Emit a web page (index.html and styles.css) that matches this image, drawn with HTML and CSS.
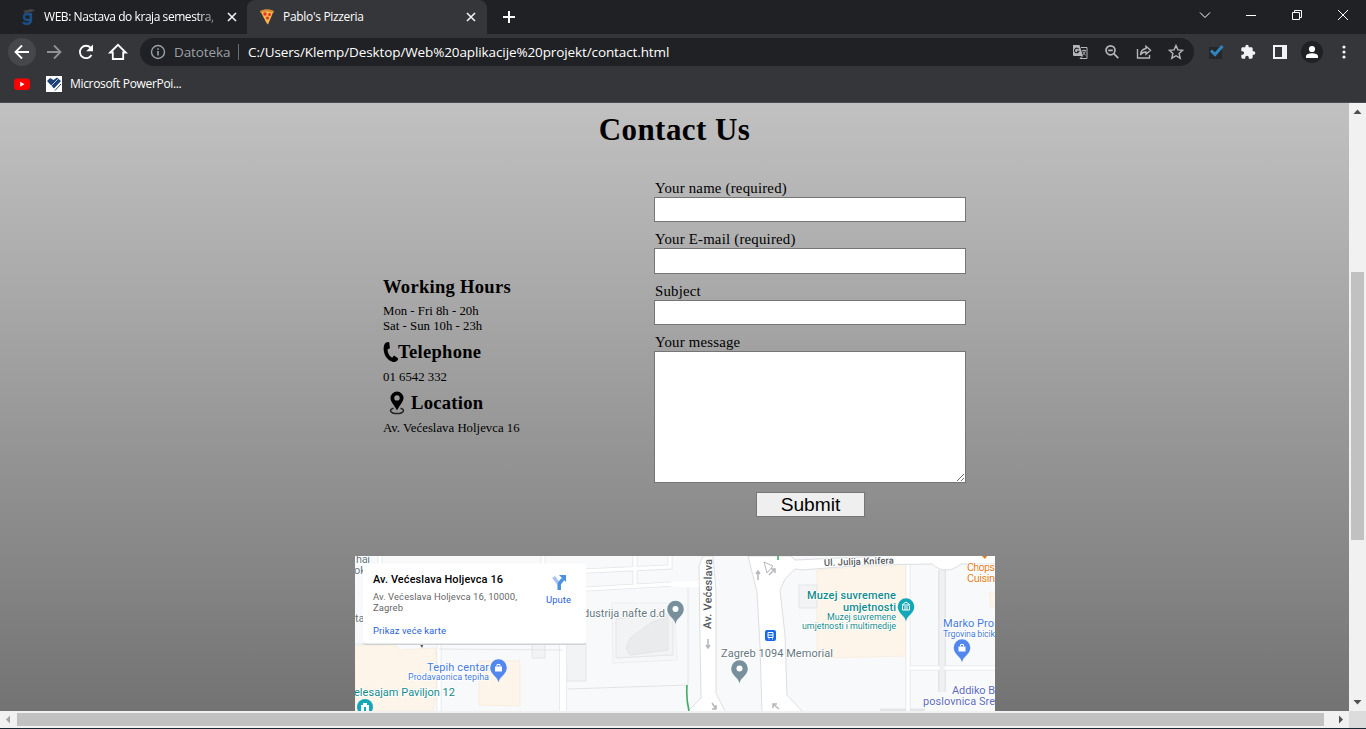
FILE: index.html
```html
<!DOCTYPE html>
<html lang="hr">
<head>
<meta charset="utf-8">
<title>Pablo's Pizzeria</title>
<link rel="stylesheet" href="styles.css">
</head>
<body>
<div class="browser">
  <header class="tabstrip">
    <div class="tab tab-idle">
      <svg class="favicon" viewBox="0 0 16 16"><path d="M3 2l8-2 4 1-3 2-7 1z" fill="#42454b"/><path d="M11 4v7c0 5-7 4.500-8 2M11 8c0-4-7-4-7 0s7 4 7 0z" fill="none" stroke="#1b4f86" stroke-width="2.300"/></svg>
      <span class="tab-title fade">WEB: Nastava do kraja semestra,</span>
      <svg class="close" viewBox="0 0 10 10"><path d="M1 1l8 8M9 1L1 9"/></svg>
    </div>
    <div class="tab tab-active">
      <svg class="favicon" viewBox="0 0 16 16"><path d="M1.500 2.500C5 .5 11 .5 14.500 2.500L9 15.500 7.500 14z" fill="#f6b64b"/><path d="M1 2C5-.5 11-.5 15 2l-.6 2C11 2 5 2 1.800 4z" fill="#d58a35"/><circle cx="6" cy="5" r="1.700" fill="#e5342b"/><circle cx="10.500" cy="5.500" r="1.500" fill="#e5342b"/><circle cx="8.500" cy="9" r="1.600" fill="#e5342b"/></svg>
      <span class="tab-title">Pablo's Pizzeria</span>
      <svg class="close" viewBox="0 0 10 10"><path d="M1 1l8 8M9 1L1 9"/></svg>
    </div>
    <svg class="newtab" viewBox="0 0 12 12"><path d="M6 0v12M0 6h12"/></svg>
    <div class="winctl">
      <svg viewBox="0 0 12 12"><path d="M1 3.500l5 5 5-5"/></svg>
      <svg viewBox="0 0 12 12"><path d="M1 6.500h10"/></svg>
      <svg viewBox="0 0 12 12"><path d="M1.500 3.500h7v7h-7zM3.500 3.500v-2h7v7h-2"/></svg>
      <svg viewBox="0 0 12 12"><path d="M1 1l10 10M11 1L1 11"/></svg>
    </div>
  </header>

  <div class="toolbar">
    <span class="round"><svg class="ic" viewBox="0 0 20 20"><path d="M17 10H4M10 3.500L3.500 10l6.500 6.500" class="nav"/></svg></span>
    <svg class="ic dim" viewBox="0 0 20 20"><path d="M3 10h13M10 3.500l6.500 6.500-6.500 6.500" class="nav"/></svg>
    <svg class="ic" viewBox="0 0 20 20"><path d="M15.500 13a6.200 6.200 0 1 1-.8-7.200" class="nav"/><path d="M17 2.500v6.800h-6.800z" fill="#fff"/></svg>
    <svg class="ic" viewBox="0 0 20 20"><path d="M2.200 10.500L10 2.800l7.800 7.700h-2.600V17H4.800v-6.500z" class="nav"/></svg>
    <div class="omnibox">
      <svg class="info" viewBox="0 0 16 16"><circle cx="8" cy="8" r="6.500" fill="none" stroke="#9aa0a6" stroke-width="1.400"/><path d="M8 7v4.500M8 4.200v1.600" stroke="#9aa0a6" stroke-width="1.600"/></svg>
      <span class="scheme">Datoteka</span><span class="divider"></span><span class="url">C:/Users/Klemp/Desktop/Web%20aplikacije%20projekt/contact.html</span>
      <div class="omni-icons">
        <svg viewBox="0 0 16 16"><path d="M1 1h6.500l3.500 11H2a1 1 0 0 1-1-1z" fill="#b5b7ba"/><path d="M9 3.500h6v11H8l2.500-2.500" fill="none" stroke="#b5b7ba"/><path d="M6.800 5.300a2.300 2.300 0 1 0 .2 1.900H5" fill="none" stroke="#202124" stroke-width="1.100"/><path d="M10 6.500h4M12 5.500v1M13.300 6.500c-.3 2-1.300 3.500-2.500 4.500M10.800 7.500c.5 1.500 1.500 2.700 2.900 3.700" fill="none" stroke="#b5b7ba" stroke-width=".9"/></svg>
        <svg viewBox="0 0 16 16" class="line"><circle cx="6.500" cy="6.300" r="4.500"/><path d="M9.800 9.600l4.500 4.500M4.200 6.300h4.600"/></svg>
        <svg viewBox="0 0 16 16" class="line thin"><path d="M1.500 5v9h12v-3M10 2.200l4.500 4-4.500 4V8C7.500 8 5.500 9 4.500 11c.2-4 2.500-6 5.500-6.500z"/></svg>
        <svg viewBox="0 0 16 16" class="line thin"><path d="M8 1.500l1.900 4.400 4.800.4-3.600 3.200 1.100 4.700L8 11.700l-4.200 2.500 1.100-4.700-3.600-3.200 4.800-.4z"/></svg>
      </div>
    </div>
    <div class="extensions">
      <svg viewBox="0 0 16 16"><path d="M1 3h13v12H1z" fill="#26272b"/><path d="M3 6.500l4 4L14.500 2" fill="none" stroke="#2e86bd" stroke-width="3"/></svg>
      <svg viewBox="0 0 24 24"><path fill="#f1f3f4" d="M20.500 11H19V7c0-1.100-.9-2-2-2h-4V3.500a2.500 2.500 0 0 0-5 0V5H4c-1.100 0-2 .9-2 2v3.800h1.500a2.700 2.700 0 0 1 0 5.400H2V20c0 1.100.9 2 2 2h3.800v-1.500a2.700 2.700 0 0 1 5.400 0V22H17c1.100 0 2-.9 2-2v-4h1.500a2.500 2.500 0 0 0 0-5z"/></svg>
      <svg viewBox="0 0 16 16"><path fill="#f1f3f4" fill-rule="evenodd" d="M1 1h14v14H1zM3 3v10h7V3z"/></svg>
      <span class="avatar"><svg viewBox="0 0 16 16"><circle cx="8" cy="5" r="3.100" fill="#fff"/><path d="M2 14v-1.700C2 10 6 9.300 8 9.300s6 .7 6 3V14z" fill="#fff"/></svg></span>
      <svg viewBox="0 0 16 16" fill="#f1f3f4"><circle cx="8" cy="3" r="1.600"/><circle cx="8" cy="8" r="1.600"/><circle cx="8" cy="13" r="1.600"/></svg>
    </div>
  </div>

  <nav class="bookmarks">
    <svg class="bm" viewBox="0 0 16 16"><rect y="2.500" width="16" height="11.500" rx="3" fill="#f00"/><path d="M6.200 5.700v5l4.300-2.500z" fill="#fff"/></svg>
    <svg class="bm bm-two" viewBox="0 0 16 16"><path d="M0 0h16v16H0z" fill="#fff"/><path d="M1 5l3-3 3.500 2L11 1.500 15 5l-7 7.500z" fill="#1d4079"/><path d="M8 14l7-8M5 10l7-7M10 14l5-5.500" stroke="#fff" stroke-width=".7"/><path d="M9 14.500l6-6.500" stroke="#1d4079" stroke-width="1"/></svg>
    <span class="bm-label">Microsoft PowerPoi...</span>
  </nav>

  <div class="viewport">
    <main class="page">
      <h1 class="heading">Contact Us</h1>
      <div class="contact">
        <section class="details">
          <h2 class="sub">Working Hours</h2>
          <p class="text">Mon - Fri 8h - 20h<br>Sat - Sun 10h - 23h</p>
          <h2 class="sub"><svg class="phone" viewBox="0 0 15 20"><path d="M5.500 0L3 .6C-1.500 4 .2 17.500 10 20c2 .3 4-.7 5-2.600.2-.6 0-1-.4-1.400l-2.800-2c-.6-.3-1.100-.2-1.500.3l-1 1.400C6.500 14.500 4.500 11 4.600 7.300l1.500-.5c.6-.2.8-.6.7-1.200L6.300.8C6.200.2 6 0 5.500 0z"/></svg>Telephone</h2>
          <p class="text">01 6542 332</p>
          <h2 class="sub"><svg class="place" viewBox="0 0 16 24"><path fill-rule="evenodd" d="M8 .5a6.500 6.500 0 0 0-6.500 6.500c0 4 4.500 8 6.500 12.500 2-4.500 6.500-8.500 6.500-12.500A6.500 6.500 0 0 0 8 .5zm0 3.700a2.700 2.700 0 1 1 0 5.400 2.700 2.700 0 0 1 0-5.400z"/><path d="M4.500 17.200C-.5 18.500 1 22.500 8 22.500s8.500-4 3.500-5.300" fill="none" stroke="#222" stroke-width="1.500"/></svg>Location</h2>
          <p class="text">Av. Većeslava Holjevca 16</p>
        </section>
        <form class="form">
          <label class="field">Your name (required)<input class="input" type="text"></label>
          <label class="field">Your E-mail (required)<input class="input tall" type="text"></label>
          <label class="field">Subject<input class="input" type="text"></label>
          <label class="field">Your message<textarea class="input area"></textarea></label>
          <button class="submit" type="button">Submit</button>
        </form>
      </div>

      <svg class="map" viewBox="355 556 640 155">
        <defs>
          <path id="pin" d="M0 15C-.8 9-8.300 7-8.300 0a8.300 8.300 0 0 1 16.600 0C8.300 7 .8 9 0 15z"/>
        </defs>
        <rect x="355" y="556" width="640" height="155" fill="#f8f9fa"/>
        <g fill="#fef5ea" stroke="#f8e8d6" stroke-width=".7">
          <path d="M355 646l40-1 5 5 35-2 3 32-5 31h-78z"/>
          <path d="M479 661h41v45l-41-1z"/>
          <path d="M817 570l91-6v92l-91 2z"/>
          <path d="M990 592h8v16l-8-2z"/>
        </g>
        <g fill="#f2f3f5" stroke="#e3e5e8">
          <path d="M532 641h13v17h-13zM566 643h20v38h-19zM799 585h18v23h-18z"/>
          <path d="M612 603h62l3 57-64 3z" fill="#f6f7f8" stroke="#eceef0"/>
          <path d="M616 619l8-1 41-4 8 3v38l-57 3z"/>
          <path d="M629 653l-3-5 4-10 22-16 16-5v33l-38 5z" fill="#eaebed"/>
        </g>
        <g fill="none" stroke="#e3e5e8" stroke-width="5">
          <path d="M586 571l84-4v-11M586 589l87-5M635 556v30M439 645v66M380 556v10M543 556v9M908 556v155M910 668h85M880 711h45"/>
          <path d="M563 644v67M942 570v122" stroke-width="8"/>
        </g>
        <g fill="none" stroke="#fff" stroke-width="3.400">
          <path d="M586 571l84-4v-11M586 589l87-5M635 556v30M439 645v66M380 556v10M543 556v9M908 556v155M910 668h85"/>
          <path d="M563 644v67" stroke-width="6.500"/>
        </g>
        <path d="M942 570v122" fill="none" stroke="#eff0f2" stroke-width="5"/>
        <path d="M355 644h84M439 649l124 1M568 689l120-4M688 588v97" fill="none" stroke="#e2e4e7"/>
        <path d="M671 581h29v6h-29z" fill="#fff"/>
        <g fill="#fff" stroke="#dcdee1">
          <path d="M703 556h10l3 35 0 80 0 22 10 20h-40l15-15-1-60-1-72z"/>
          <path d="M748 556h43l4 4 67-3 66-5h70v12h-37c-10 8-20 8-29 0l-68 1-62 5-7-1-10 10-5 11 5 45 2 60 17 18h-42l-2-67-3-54z"/>
        </g>
        <path d="M687 685q-1 14 2 26M778 556v4" fill="none" stroke="#46aa69" stroke-width="1.600"/>
        <g fill="none" stroke="#b4b7bb" stroke-width="1.500">
          <path d="M708 639v9m-2-3l2 3 2-3M758 580v-9m-2 3l2-3 2 3M769 575l6-6m-4 0h4v4M712 703l4 6m0-4v4h-4M779 709l-6-5m0 4v-4h4"/>
          <path d="M764 562l9 4-6 7z" stroke-width="1"/>
        </g>
        <g class="m-road">
          <text x="711" y="629" transform="rotate(-89 711 629)" textLength="70">Av. Većeslava</text>
          <text x="824" y="566" transform="rotate(-2 824 566)" class="m-street" textLength="70">Ul. Julija Knifera</text>
        </g>
        <g class="m-grey">
          <text x="356" y="563" textLength="14">hai</text><text x="354" y="574">ok</text><text x="355" y="622">ta</text>
          <text x="583" y="617" textLength="82">dustrija nafte d.d</text>
          <text x="721" y="657" textLength="112">Zagreb 1094 Memorial</text>
        </g>
        <g class="m-teal">
          <text x="807" y="599" class="strong" textLength="89">Muzej suvremene</text>
          <text x="843" y="611" class="strong" textLength="53">umjetnosti</text>
          <text x="827" y="620" class="small" textLength="69">Muzej suvremene</text>
          <text x="802" y="629" class="small" textLength="94">umjetnosti i multimedije</text>
          <text x="354" y="696" textLength="101">elesajam Paviljon 12</text>
        </g>
        <g class="m-blue">
          <text x="427" y="671" textLength="62">Tepih centar</text>
          <text x="408" y="680" class="small" textLength="81">Prodavaonica tepiha</text>
          <text x="943" y="627" textLength="51">Marko Pro</text>
          <text x="943" y="637" class="small" textLength="52">Trgovina bicik</text>
        </g>
        <g class="m-orange"><text x="967" y="571" textLength="28">Chops</text><text x="967" y="582" textLength="28">Cuisin</text><path d="M982 556h5l-2 3z"/></g>
        <g class="m-purple"><text x="952" y="694" textLength="43">Addiko B</text><text x="923" y="705" textLength="72">poslovnica Sre</text></g>
        <use href="#pin" x="675.500" y="609" fill="#78909c"/><circle cx="675.500" cy="609" r="3" fill="#fff"/>
        <use href="#pin" x="739.500" y="668.500" fill="#78909c"/><circle cx="739.500" cy="668.500" r="3" fill="#fff"/>
        <use href="#pin" x="906" y="606.500" fill="#12a8b8"/>
        <path d="M902 605l4-3 4 3zM902.500 606v4h7v-4M905 606v4M907 606v4" stroke="#fff" fill="none"/>
        <use href="#pin" x="498.500" y="667.500" fill="#5187ee"/><path d="M495 666.500h7v5h-7z" fill="#fff"/><path d="M497 666.500v-2h3v2" fill="none" stroke="#fff"/>
        <use href="#pin" x="962" y="647.500" fill="#5187ee"/><path d="M958.500 646.500h7v5h-7z" fill="#fff"/><path d="M960.500 646.500v-2h3v2" fill="none" stroke="#fff"/>
        <circle cx="365" cy="707" r="8" fill="#12a8b8"/><path d="M361 705h8v6h-8zM363 705v-2h4v2" fill="#fff"/><path d="M364 707h2v4h-2z" fill="#12a8b8"/>
        <rect x="765" y="630" width="11" height="11" rx="2" fill="#1a68e8"/><path d="M768 632.500h5v5h-5zM768 635h5M768.500 639h1M772 639h1" fill="none" stroke="#fff"/>
        <path d="M419 643h5l-2 5z" fill="#555"/>
        <rect x="363" y="565" width="223" height="80" rx="2" fill="#cfd1d4"/>
        <rect x="363" y="563.500" width="223" height="80" rx="2" fill="#fff"/>
        <g class="card">
          <text x="373" y="583" class="card-title" textLength="130">Av. Većeslava Holjevca 16</text>
          <text x="373" y="600" textLength="144">Av. Većeslava Holjevca 16, 10000,</text>
          <text x="373" y="611" textLength="30">Zagreb</text>
          <text x="373" y="634" class="link" textLength="73">Prikaz veće karte</text>
          <text x="546" y="603" class="link" textLength="25">Upute</text>
        </g>
        <path d="M553.500 577l5.500 7" stroke="#a5c4f4" stroke-width="3.500" fill="none"/><path d="M559.200 590v-5c0-2 2-4 4-6" stroke="#4a90e2" stroke-width="3.500" fill="none"/><path d="M559 575h7v7z" fill="#4a90e2"/>
      </svg>
    </main>
    <div class="vscroll"><svg class="arrow" viewBox="0 0 17 17"><path d="M4.500 11l4-4.500 4 4.500z"/></svg><div class="vthumb"></div><svg class="arrow end" viewBox="0 0 17 17"><path d="M4.500 6l4 4.500 4-4.500z"/></svg></div>
    <div class="hscroll"><svg class="arrow pale" viewBox="0 0 17 17"><path d="M10 4.500L6 8.500l4 4z"/></svg><div class="hthumb"></div><svg class="arrow end" viewBox="0 0 17 17"><path d="M7 4.500l4 4-4 4z"/></svg></div>
    <div class="corner"></div>
  </div>
  <div class="edge"></div>
</div>
</body>
</html>
```
FILE: styles.css
```css
* { box-sizing: border-box; }
body { margin: 0; overflow: hidden; }
svg { display: block; flex: none; }
.browser { width: 1366px; height: 729px; display: flex; flex-direction: column; background: #35363a; font: 12px "Open Sans", sans-serif; color: #fff; overflow: hidden; }

.tabstrip { display: flex; height: 34px; background: #202124; align-items: center; }
.tab { display: flex; align-items: center; height: 34px; }
.tab-idle { width: 247px; padding-left: 20px; }
.tab-active { width: 240px; padding-left: 12px; background: #35363a; border-radius: 8px 8px 0 0; }
.favicon { width: 16px; height: 16px; margin-right: 8px; }
.tab-title { width: 173px; margin-right: -2px; white-space: nowrap; letter-spacing: -0.32px; line-height: 18px; }
.tab-active .tab-title { width: 185px; }
.fade { letter-spacing: -0.44px; -webkit-mask-image: linear-gradient(90deg, #000 88%, rgba(0,0,0,.3)); mask-image: linear-gradient(90deg, #000 88%, rgba(0,0,0,.3)); }
.close { width: 10px; height: 10px; margin-left: 12px; stroke: #f1f3f4; stroke-width: 1.6; }
.tab-active .close { margin-left: 0; }
.newtab { width: 12px; height: 12px; margin-left: 16px; stroke: #fff; stroke-width: 2; }
.winctl { display: flex; gap: 34px; margin: -5px 17px 0 auto; }
.winctl svg { width: 12px; height: 12px; fill: none; stroke: #fff; stroke-width: 1; }

.toolbar { display: flex; align-items: center; height: 36px; padding-left: 8px; }
.round { width: 28px; height: 28px; border-radius: 50%; background: #46474b; padding: 4px; margin-right: 8px; }
.ic { width: 20px; height: 20px; margin-right: 12px; }
.round .ic { margin: 0; }
.nav { fill: none; stroke: #fff; stroke-width: 1.8; }
.dim { opacity: .45; }
.omnibox { display: flex; align-items: center; width: 1054px; height: 28px; border-radius: 14px; background: #202124; padding: 0 10px; font-size: 13.5px; }
.info { width: 16px; height: 16px; margin-right: 8px; }
.scheme { width: 64px; color: #9aa0a6; white-space: nowrap; letter-spacing: -0.1px; }
.divider { width: 1px; height: 16px; background: #6a6d72; margin-right: 9px; }
.url { white-space: nowrap; letter-spacing: -0.11px; }
.omni-icons { display: flex; gap: 16px; margin-left: auto; }
.omni-icons svg { width: 16px; height: 16px; }
.line { fill: none; stroke: #b5b7ba; stroke-width: 1.7; }
.thin { stroke-width: 1.4; }
.extensions { display: flex; align-items: center; gap: 16px; margin-left: 14px; }
.extensions svg { width: 16px; height: 16px; }
.avatar { width: 22px; height: 22px; border-radius: 50%; background: #202124; padding: 3px; margin: 0 -3px; }

.bookmarks { display: flex; align-items: center; height: 33px; padding: 0 0 4px 14px; border-bottom: 1px solid #4c4d50; }
.bm { width: 16px; height: 16px; }
.bm-two { margin: 0 8px 0 16px; }
.bm-label { white-space: nowrap; letter-spacing: -0.33px; margin-top: -1px; }

.viewport { display: grid; grid-template: 608px 17px / 1349px 17px; }
.page { background: linear-gradient(#c1c1c1, #737373); color: #000; font-family: "Liberation Serif", serif; overflow: hidden; }
.heading { margin: 10px 0 0; height: 34px; line-height: 34px; font-size: 31px; letter-spacing: .45px; text-align: center; }
.contact { display: flex; margin: 30px 0 0 383px; height: 379px; }
.details { width: 271px; padding-top: 99px; }
.sub { display: flex; align-items: center; height: 22px; margin: 0; font-size: 18.6px; letter-spacing: .27px; }
.text { margin: 6px 0 5px; font-size: 12.8px; line-height: 15px; }
.text + .sub { height: 26px; }
.text + .sub + .text { margin: 5px 0; }
.phone { width: 15px; height: 20px; }
.place { width: 16px; height: 24px; margin: 0 6px 0 6px; }
.form { width: 312px; padding-top: 3px; }
.field { display: block; font-size: 14.8px; letter-spacing: .22px; line-height: 17px; padding-left: 1px; margin-bottom: 9px; }
.input { display: block; width: 312px; height: 25px; margin: 0 0 0 -1px; background: #fff; border: 1px solid #767676; border-radius: 0; outline: 0; }
.tall { height: 26px; }
.area { height: 132px; resize: both; }
.submit { display: block; width: 109px; height: 25px; margin: 0 0 0 102px; padding: 0; background: #efefef; border: 1px solid #767676; font: 19.2px/22px "Liberation Sans", sans-serif; color: #000; }

.map { width: 640px; height: 155px; margin-left: 355px; font: 11px Roboto, sans-serif; letter-spacing: 0; }
.map text { paint-order: stroke; stroke: #fff; stroke-width: 1.5px; }
.m-road { fill: #55595e; font-weight: 500; }
.m-street { font-size: 9.5px; }
.m-grey { fill: #667781; }
.m-teal { fill: #128b8b; }
.m-blue { fill: #447bdf; }
.m-orange { fill: #e37d1b; }
.m-purple { fill: #5c6bc0; }
.strong { font-weight: 500; }
.small { font-size: 9px; }
.card { fill: #666; font-size: 9.5px; }
.card-title { fill: #000; font-size: 11px; font-weight: 500; }
.link { fill: #2962d9; }

.vscroll, .hscroll { display: flex; background: #f1f1f1; }
.vscroll { flex-direction: column; }
.arrow { width: 17px; height: 17px; fill: #505050; }
.pale { fill: #a3a3a3; }
.end { margin: auto 0 0; }
.hscroll .end { margin: 0 0 0 auto; }
.vthumb { width: 13px; height: 268px; margin: 152px 0 0 2px; background: #c1c1c1; }
.hthumb { width: 1307px; height: 13px; margin-top: 2px; background: #c1c1c1; }
.corner { background: #dcdcdc; }
.edge { height: 1px; background: #182833; }
```
